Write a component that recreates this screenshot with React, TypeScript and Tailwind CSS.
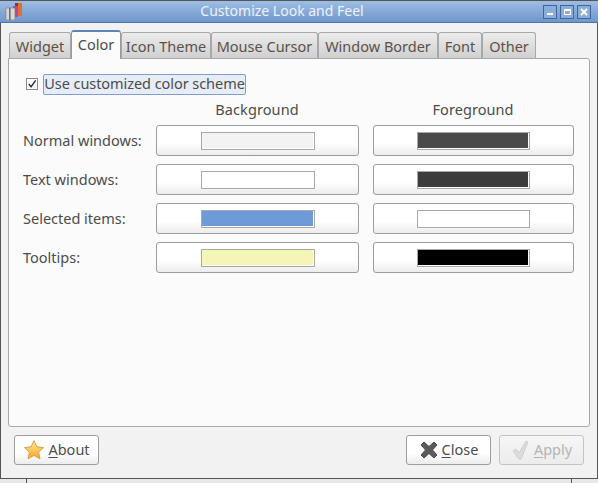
const font = { fontFamily: '"Noto Sans", sans-serif' };

function Tab({ label, w, active }: { label: string; w: string; active?: boolean }) {
  if (active) {
    return (
      <div className={`${w} h-[29px] -mb-px z-10 shrink-0 rounded-t-[3px] border border-b-0 border-[#9a9a9a] border-t-[#5f85b8] bg-[#fbfbfb] border-t-2 flex items-center justify-center text-[#4c4c4c]`}>
        <span className="-mt-[3px]">{label}</span>
      </div>
    );
  }
  return (
    <div className={`${w} h-[26px] shrink-0 rounded-t-[3px] border border-b-0 border-[#a8a8a8] bg-gradient-to-b from-[#ececec] to-[#d0d0d0] flex items-center justify-center text-[#5c5148] pt-[1px]`}>
      {label}
    </div>
  );
}

function Swatch({ color, wide }: { color: string; wide?: boolean }) {
  return (
    <div className="h-[31px] flex-1 rounded-[3px] border border-[#9d9d9d] bg-gradient-to-b from-[#ffffff] from-60% to-[#ececec] flex items-center justify-center">
      <div className={`${wide ? "w-[114px]" : "w-[113px]"} h-[18px] mt-[1px] border border-[#a8a8a8] bg-white pr-px pb-px`}>
        <div className="w-full h-full" style={{ backgroundColor: color }} />
      </div>
    </div>
  );
}

function Row({ label, bg, fg }: { label: string; bg: string; fg: string }) {
  return (
    <div className="flex items-center h-[31px]">
      <div className="w-[133px] shrink-0 text-[#4c4c4c] -mt-[1px] whitespace-nowrap">{label}</div>
      <div className="w-[203px] flex shrink-0"><Swatch color={bg} wide /></div>
      <div className="w-[14px] shrink-0" />
      <div className="w-[201px] flex shrink-0"><Swatch color={fg} /></div>
    </div>
  );
}

function FootButton({ w, disabled, icon, first, rest }: { w: string; disabled?: boolean; icon: React.ReactNode; first: string; rest: string }) {
  return (
    <div className={`${w} h-[30px] rounded-[3px] border flex items-center justify-center gap-[3px] bg-gradient-to-b ${disabled ? "border-[#c4c4c4] from-[#f6f6f6] to-[#ececec] text-[#b4b4b4]" : "border-[#9d9d9d] from-[#ffffff] from-60% to-[#ececec] text-[#4c4c4c]"}`}>
      {icon}
      <span className="-mt-[1px]"><span className="underline underline-offset-2">{first}</span>{rest}</span>
    </div>
  );
}

const Star = (
  <svg width="22" height="22" viewBox="0 0 22 22">
    <defs>
      <linearGradient id="st" x1="0" y1="0" x2="0" y2="1">
        <stop offset="0" stopColor="#fdeb96" />
        <stop offset="1" stopColor="#f9a42a" />
      </linearGradient>
    </defs>
    <path d="M11 1.5l2.9 6.3 6.6.8-4.9 4.5 1.4 6.7L11 16.4l-6 3.4 1.4-6.7-4.9-4.5 6.6-.8z" fill="url(#st)" stroke="#dca044" strokeWidth="1" strokeLinejoin="round" />
  </svg>
);

const CloseX = (
  <svg width="20" height="20" viewBox="0 0 20 20">
    <path d="M2 5l3-3 5 4.5L15 2l3 3-4.5 5 4.5 5-3 3-5-4.5L5 18l-3-3 4.5-5z" fill="#5a5a5a" stroke="#4a4a4a" strokeWidth="1" strokeLinejoin="round" />
  </svg>
);

const Check = (
  <svg width="20" height="20" viewBox="0 0 20 20">
    <path d="M2 11l3-2 3 4 7-12 2 1-7 17h-2z" fill="#dcdcdc" stroke="#cfcfcf" strokeWidth="1" strokeLinejoin="round" />
  </svg>
);

const AppIcon = (
  <svg width="18" height="18" viewBox="0 0 18 18" className="-mt-[1px]">
    <rect x="10" y="1" width="7" height="13" rx="1" fill="#e0702a" />
    <rect x="8" y="4" width="5" height="11" fill="#b5489a" />
    <rect x="1" y="6" width="9" height="12" rx="1" fill="#d8d8d4" stroke="#777" strokeWidth="0.6" />
    <rect x="4" y="6" width="1.6" height="12" fill="#6f6f6f" />
    <rect x="10" y="1" width="3" height="3" fill="#8a3a18" />
  </svg>
);

function WinBtn({ children }: { children: React.ReactNode }) {
  return (
    <div className="w-[14px] h-[14px] border border-[#41669c] bg-[#8cadd8] flex items-center justify-center">
      {children}
    </div>
  );
}

export default function App() {
  return (
    <div className="w-[598px] h-[483px] overflow-hidden bg-[#f2f2f2] flex flex-col text-[14.5px] leading-none" style={font}>
      <div className="h-[23px] shrink-0 border-t border-t-[#555] border-b border-b-[#4c74a8] bg-gradient-to-b from-[#9dbde3] to-[#6f97cc] flex items-center pl-[5px] pr-[6px] text-[#eef3fa] text-[14px]">
        {AppIcon}
        <div className="flex-1 text-center pr-[2px] -mt-[2px]">Customize Look and Feel</div>
        <div className="flex gap-[3px] mr-[1px]">
          <WinBtn><div className="w-[6px] h-[2px] mt-[4px] bg-white" /></WinBtn>
          <WinBtn><div className="w-[7px] h-[6px] border border-t-2 border-white" /></WinBtn>
          <WinBtn>
            <svg width="8" height="8" viewBox="0 0 8 8"><path d="M1 1l6 6M7 1L1 7" stroke="#fff" strokeWidth="2" /></svg>
          </WinBtn>
        </div>
      </div>
      <div className="flex-1 flex flex-col border-l border-r border-[#555] pl-[7px] pr-[7px] pt-[6px]">
        <div className="flex items-end gap-0 pl-[1px] h-[29px] shrink-0">
          <Tab label="Widget" w="w-[62px]" />
          <Tab label="Color" w="w-[50px]" active />
          <Tab label="Icon Theme" w="w-[90px]" />
          <Tab label="Mouse Cursor" w="w-[107px]" />
          <Tab label="Window Border" w="w-[120px]" />
          <Tab label="Font" w="w-[44px]" />
          <Tab label="Other" w="w-[54px]" />
        </div>
        <div className="h-[369px] shrink-0 rounded-b-[3px] rounded-tr-[3px] border border-[#a8a8a8] bg-[#fbfbfb] pl-[14px] pt-[14px]">
          <div className="flex items-center h-[22px]">
            <div className="w-[12px] h-[12px] ml-[3px] border border-[#8c8c8c] bg-white flex items-center justify-center">
              <svg width="10" height="10" viewBox="0 0 11 11"><path d="M2 5.5l2.5 3L9.5 1.5" fill="none" stroke="#333" strokeWidth="1.6" /></svg>
            </div>
            <div className="ml-[5px] h-[21px] w-[203px] rounded-[2px] border border-[#7f9fcb] bg-[#e6edf7] flex items-center justify-center text-[#4c4c4c] whitespace-nowrap pb-[2px] tracking-[-0.06px]">Use customized color scheme</div>
          </div>
          <div className="flex h-[26px] mt-[1px] text-[#4c4c4c] items-center">
            <div className="w-[133px]" />
            <div className="w-[203px] text-center tracking-[0.1px] pr-[1px]">Background</div>
            <div className="w-[14px]" />
            <div className="w-[201px] text-center tracking-[0.05px] pr-[1px]">Foreground</div>
          </div>
          <div className="flex flex-col gap-[8px] mt-[3px]">
            <Row label="Normal windows:" bg="#f3f3f3" fg="#4a4a4a" />
            <Row label="Text windows:" bg="#ffffff" fg="#3c3c3c" />
            <Row label="Selected items:" bg="#6f9ad8" fg="#ffffff" />
            <Row label="Tooltips:" bg="#f5f5b5" fg="#000000" />
          </div>
        </div>
        <div className="flex items-center mt-[8px] pl-[6px] pr-[6px]">
          <FootButton w="w-[85px]" icon={Star} first="A" rest="bout" />
          <div className="flex-1" />
          <FootButton w="w-[85px]" icon={CloseX} first="C" rest="lose" />
          <div className="w-[8px]" />
          <FootButton w="w-[85px]" disabled icon={Check} first="A" rest="pply" />
        </div>
      </div>
      <div className="h-[5px] shrink-0 border-t border-t-[#555] bg-[#e8e8e8] flex justify-between px-[26px]">
        <div className="w-px bg-[#555]" />
        <div className="w-px bg-[#555]" />
      </div>
    </div>
  );
}
